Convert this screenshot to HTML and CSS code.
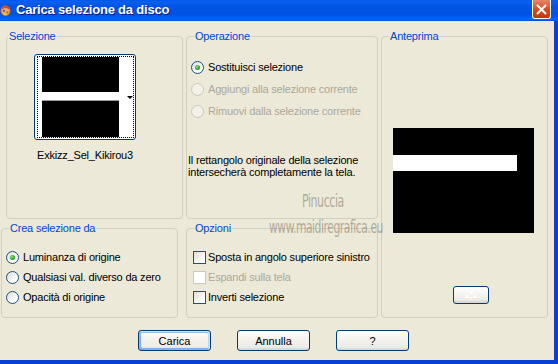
FILE: index.html
```html
<!DOCTYPE html>
<html lang="it">
<head>
  <meta charset="UTF-8">
  <title>Carica selezione da disco</title>
  <link rel="stylesheet" href="styles.css">
</head>
<body>

  <div class="window">
    <div class="titlebar">
      <span class="app-icon">
        <svg width="14" height="16" viewBox="0 0 14 16">
          <ellipse cx="7" cy="9" rx="6" ry="6.5" fill="#F2A65A" stroke="#B5521E" stroke-width="1"/>
          <path d="M2 5 Q7 0 12 5 L11 7 Q7 3 3 7 Z" fill="#D9432B"/>
          <circle cx="5" cy="9" r="1.3" fill="#2F56C9"/>
          <circle cx="9.5" cy="11" r="1.3" fill="#3BA33B"/>
          <circle cx="6" cy="13" r="1" fill="#F7E04A"/>
        </svg>
      </span>
      <span class="title">Carica selezione da disco</span>
      <span class="close-btn">
        <svg width="11" height="11" viewBox="0 0 11 11">
          <path d="M1.5 1.5 L9.5 9.5 M9.5 1.5 L1.5 9.5" stroke="#fff" stroke-width="2" stroke-linecap="round"/>
        </svg>
      </span>
    </div>

    <div class="client">
      <div class="groups">

        <fieldset class="group group-sel">
          <legend class="legend-sel">Selezione</legend>
          <div class="thumb-wrap">
            <div class="thumb">
              <div class="thumb-focus">
                <div class="thumb-img"><div class="thumb-stripe"></div></div>
                <div class="thumb-arrow"></div>
              </div>
            </div>
            <div class="thumb-name">Exkizz_Sel_Kikirou3</div>
          </div>
        </fieldset>

        <fieldset class="group group-op">
          <legend>Operazione</legend>
          <div class="opt-list op-list">
            <label class="opt"><span class="radio checked"></span>Sostituisci selezione</label>
            <label class="opt disabled"><span class="radio"></span>Aggiungi alla selezione corrente</label>
            <label class="opt disabled"><span class="radio"></span>Rimuovi dalla selezione corrente</label>
          </div>
          <p class="note">Il rettangolo originale della selezione<br>intersecherà completamente la tela.</p>
        </fieldset>

        <fieldset class="group group-preview">
          <legend>Anteprima</legend>
          <div class="preview"><div class="preview-stripe"></div></div>
          <div class="mini-btn">
            <svg width="16" height="10" viewBox="0 0 16 10">
              <circle cx="8" cy="2.5" r="1.6" fill="#fff"/>
              <circle cx="4" cy="6.5" r="1.6" fill="#fff"/>
              <circle cx="12" cy="6.5" r="1.6" fill="#fff"/>
              <circle cx="8" cy="8" r="1.4" fill="#f6f6f6"/>
            </svg>
          </div>
        </fieldset>

        <fieldset class="group group-crea">
          <legend>Crea selezione da</legend>
          <div class="opt-list">
            <label class="opt"><span class="radio checked"></span>Luminanza di origine</label>
            <label class="opt"><span class="radio"></span>Qualsiasi val. diverso da zero</label>
            <label class="opt"><span class="radio"></span>Opacità di origine</label>
          </div>
        </fieldset>

        <fieldset class="group group-opz">
          <legend>Opzioni</legend>
          <div class="opt-list">
            <label class="opt"><span class="check"></span>Sposta in angolo superiore sinistro</label>
            <label class="opt disabled"><span class="check"></span>Espandi sulla tela</label>
            <label class="opt"><span class="check"></span>Inverti selezione</label>
          </div>
        </fieldset>

      </div>

      <div class="buttons">
        <button class="btn btn-default">Carica</button>
        <button class="btn">Annulla</button>
        <button class="btn">?</button>
      </div>

      <div class="watermark">
        <span class="wm-name">Pinuccia</span>
        <span class="wm-site">www.maidiregrafica.eu</span>
      </div>
    </div>
  </div>

</body>
</html>
```

FILE: styles.css
```css
body {
  margin: 0;
  font-family: "Liberation Sans", Arial, sans-serif;
  font-size: 11px;
  letter-spacing: -0.2px;
  color: #000;
  background-color: #ECE9D8;
}

.window {
  width: 558px;
  height: 364px;
  display: flex;
  flex-direction: column;
  overflow: hidden;
}

/* title bar */
.titlebar {
  height: 21px;
  flex-shrink: 0;
  display: flex;
  align-items: center;
  background: linear-gradient(180deg, #0058EE 0, #0A5FEF 10%, #0054E3 30%, #0052E6 70%, #0060FA 88%, #0A66FF 94%, #0046D6 100%);
}

.app-icon {
  width: 11px;
  height: 16px;
  overflow: hidden;
  display: flex;
  justify-content: flex-end;
  margin-top: -2px;
}

.title {
  margin-left: 5px;
  margin-top: -3px;
  color: #fff;
  font-weight: bold;
  font-size: 13px;
  letter-spacing: -0.2px;
  text-shadow: 1px 1px #0A1883;
}

.close-btn {
  margin-left: auto;
  margin-right: 7px;
  align-self: flex-start;
  width: 19px;
  height: 19px;
  box-sizing: border-box;
  border: 1px solid #fff;
  border-top: none;
  border-radius: 0 0 3px 3px;
  background: linear-gradient(180deg, #E7876A, #D9491F 55%, #C3360B);
  display: flex;
  align-items: center;
  justify-content: center;
}

/* client area */
.client {
  position: relative;
  flex: 1;
  border-right: 4px solid #0A3FD4;
  border-bottom: 4px solid #0A3FD4;
  padding: 9px 0 0 1px;
}

.groups {
  display: grid;
  grid-template-columns: 182px 192px 167px;
  grid-template-rows: 189px 96px;
  column-gap: 3px;
  row-gap: 3px;
}

.group {
  margin: 0;
  padding: 0;
  min-width: 0;
  border: 1px solid #D0D0BF;
  border-radius: 4px;
  display: flex;
  flex-direction: column;
  align-items: flex-start;
}

legend {
  margin-left: 7px;
  padding: 0 1px;
  line-height: 13px;
  color: #0046D5;
}

.group-sel {
  margin: 0 0 0 5px;
}

.legend-sel {
  margin-left: 1px;
}

.group-crea {
  margin-right: 5px;
}

.group-preview {
  grid-row: 1 / 3;
  grid-column: 3;
}

/* selezione thumbnail */
.thumb-wrap {
  margin: 11px 0 0 27px;
  width: 102px;
  display: flex;
  flex-direction: column;
  align-items: center;
}

.thumb {
  width: 102px;
  height: 86px;
  box-sizing: border-box;
  border: 1px solid #003C74;
  border-radius: 3px;
  background: #fff;
  padding: 1px 1px 1px 2px;
}

.thumb-focus {
  height: 100%;
  box-sizing: border-box;
  border: 1px dotted #000;
  padding-left: 4px;
  display: flex;
  align-items: center;
}

.thumb-img {
  width: 78px;
  height: 100%;
  background: #000;
  padding-top: 35px;
  box-sizing: border-box;
}

.thumb-stripe {
  height: 8px;
  background: #fff;
  border-bottom: 1px solid #9A9A9A;
}

.thumb-arrow {
  margin-left: 8px;
  border-left: 3px solid transparent;
  border-right: 3px solid transparent;
  border-top: 3px solid #000;
}

.thumb-name {
  margin-top: 9px;
  line-height: 13px;
  white-space: nowrap;
}

/* radios and checkboxes */
.opt-list {
  margin-top: 12px;
  padding-left: 4px;
  display: flex;
  flex-direction: column;
}

.op-list {
  margin-top: 13px;
}

.op-list .opt {
  height: 22px;
}

.opt {
  height: 20px;
  display: flex;
  align-items: center;
  gap: 4px;
  white-space: nowrap;
}

.opt.disabled {
  color: #ACA899;
}

.radio {
  width: 13px;
  height: 13px;
  box-sizing: border-box;
  border: 1px solid #1C5180;
  border-radius: 50%;
  background: linear-gradient(135deg, #DCDCD7, #FFFFFF 75%);
  display: flex;
  align-items: center;
  justify-content: center;
}

.radio.checked::after {
  content: "";
  width: 5px;
  height: 5px;
  border-radius: 50%;
  background: radial-gradient(circle at 40% 40%, #8CE68C, #21A121 60%, #1A841A);
}

.disabled .radio {
  border-color: #CAC8BB;
  background: #F3F1E7;
}

.group-opz .opt-list {
  padding-left: 6px;
}

.group-opz .opt {
  gap: 2px;
}

.check {
  width: 13px;
  height: 13px;
  box-sizing: border-box;
  border: 1px solid #1C5180;
  background: linear-gradient(135deg, #DCDCD7, #FFFFFF 80%);
}

.disabled .check {
  border-color: #CAC8BB;
  background: #FFFFFF;
}

.note {
  margin: 32px 0 0 1px;
  line-height: 12px;
}

/* anteprima */
.preview {
  margin: 85px 0 0 11px;
  width: 141px;
  height: 105px;
  background: #000;
  padding-top: 27px;
  box-sizing: border-box;
}

.preview-stripe {
  width: 124px;
  height: 16px;
  background: #fff;
}

.mini-btn {
  margin: 53px 0 0 71px;
  width: 36px;
  height: 18px;
  box-sizing: border-box;
  border: 1px solid #003C74;
  border-radius: 3px;
  background: linear-gradient(180deg, #FFFFFF, #ECEBE6 80%, #D6D0C5);
  display: flex;
  align-items: center;
  justify-content: center;
}

/* bottom buttons */
.buttons {
  margin-top: 12px;
  padding-left: 137px;
  display: flex;
  gap: 26px;
}

.btn {
  width: 73px;
  height: 21px;
  padding: 0;
  border: 1px solid #003C74;
  border-radius: 3px;
  background: linear-gradient(180deg, #FFFFFF, #F4F3EE 40%, #ECEBE6 85%, #D6D0C5);
  font-family: "Liberation Sans", Arial, sans-serif;
  font-size: 11px;
  color: #000;
}

.btn-default {
  box-shadow: inset -1px 1px #CEE7FF, inset 1px 2px #98B8EA, inset -2px 2px #BCD4F6, inset 1px -1px #89ADE4, inset 2px -2px #89ADE4;
}

/* watermark over the dialog */
.watermark {
  position: absolute;
  left: 269px;
  top: 172px;
  font-family: "DejaVu Sans Condensed", "DejaVu Sans", sans-serif;
  font-size: 17px;
  line-height: 17px;
  color: rgba(120, 114, 100, 0.55);
  letter-spacing: -0.6px;
  pointer-events: none;
}

.wm-name {
  display: block;
  margin-left: 33px;
  transform: scaleX(0.72);
  transform-origin: left top;
}

.wm-site {
  display: block;
  margin-top: 9px;
  transform: scaleX(0.7);
  transform-origin: left top;
  white-space: nowrap;
}
```
